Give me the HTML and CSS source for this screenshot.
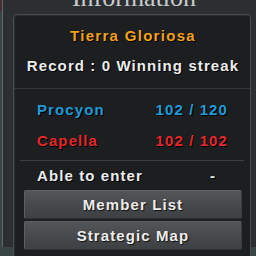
FILE: index.html
```html
<!DOCTYPE html>
<html>
<head>
<meta charset="utf-8">
<link rel="stylesheet" href="styles.css">
</head>
<body>
<div class="window">
  <div class="title">Information</div>
  <span class="close">×</span>
  <div class="panel">
    <div class="line gold">Tierra Gloriosa</div>
    <div class="line record">Record : 0 Winning streak</div>
    <div class="sep wide"></div>
    <div class="row first"><span class="blue">Procyon</span><span class="blue">102 / 120</span></div>
    <div class="row"><span class="red">Capella</span><span class="red">102 / 102</span></div>
    <div class="sep narrow"></div>
    <div class="row able"><span>Able to enter</span><span class="dash">-</span></div>
    <div class="btn first-btn">Member List</div>
    <div class="btn">Strategic Map</div>
  </div>
</div>
</body>
</html>
```
FILE: styles.css
```css
html, body {
  margin: 0;
  padding: 0;
  width: 256px;
  height: 256px;
  overflow: hidden;
}
body {
  background: linear-gradient(#4a2b31 0, #4a2b31 11px, #384543 11px, #384543 100%);
  font-family: "Liberation Sans", Arial, sans-serif;
  font-weight: bold;
  font-size: 15px;
  letter-spacing: 1.1px;
  color: #ececec;
}
.window {
  position: relative;
  margin-left: 2px;
  width: 253px;
  height: 256px;
  border-left: 1px solid #62676a;
  background: #2c2f32;
}
.title {
  font-family: "Liberation Serif", "Times New Roman", serif;
  font-weight: normal;
  font-size: 26px;
  letter-spacing: 0;
  line-height: 14px;
  height: 14px;
  margin-top: -9px;
  margin-bottom: 9px;
  text-align: center;
  color: #c9cbcd;
  padding-left: 9px;
}
.close {
  position: absolute;
  top: -6px;
  right: 6px;
  font-family: "DejaVu Sans", sans-serif;
  font-size: 14px;
  font-weight: normal;
  color: #8a8d90;
  line-height: 14px;
}
.panel {
  margin-left: 10px;
  width: 238px;
  height: 260px;
  border: 1px solid #4a4d50;
  border-radius: 4px;
  background: #1c1e20;
  box-shadow: inset 1px 1px 0 #2a2c2f;
  padding-top: 11px;
  box-sizing: border-box;
}
.line {
  line-height: 20px;
  height: 20px;
  text-align: center;
  text-shadow: 1px 1px 0 #000;
  padding-left: 2px;
}
.gold { color: #f2a119; letter-spacing: 1.3px; }
.record { margin-top: 10px; }
.sep { height: 1px; background: #34373a; }
.sep.wide { margin-top: 12px; }
.sep.narrow { margin: 9px 6px 0 6px; background: #3c3f42; }
.row {
  display: flex;
  justify-content: space-between;
  line-height: 20px;
  height: 20px;
  padding: 0 22px 0 23px;
  margin-top: 11px;
  text-shadow: 1px 1px 0 #000;
}
.row.able { margin-top: 5px; padding-right: 34px; }
.blue { color: #1f9ad7; }
.red { color: #e7282b; }
.btn {
  margin: 2px 8px 0 10px;
  height: 27px;
  line-height: 27px;
  border: 1px solid #5c5f62;
  border-bottom-color: #2e3033;
  border-right-color: #3b3e41;
  border-radius: 2px;
  background: linear-gradient(#535659, #47494c 50%, #3e4144);
  text-align: center;
  color: #ececec;
  text-shadow: 1px 1px 1px #111;
}
.first-btn { margin-top: 4px; }
```
